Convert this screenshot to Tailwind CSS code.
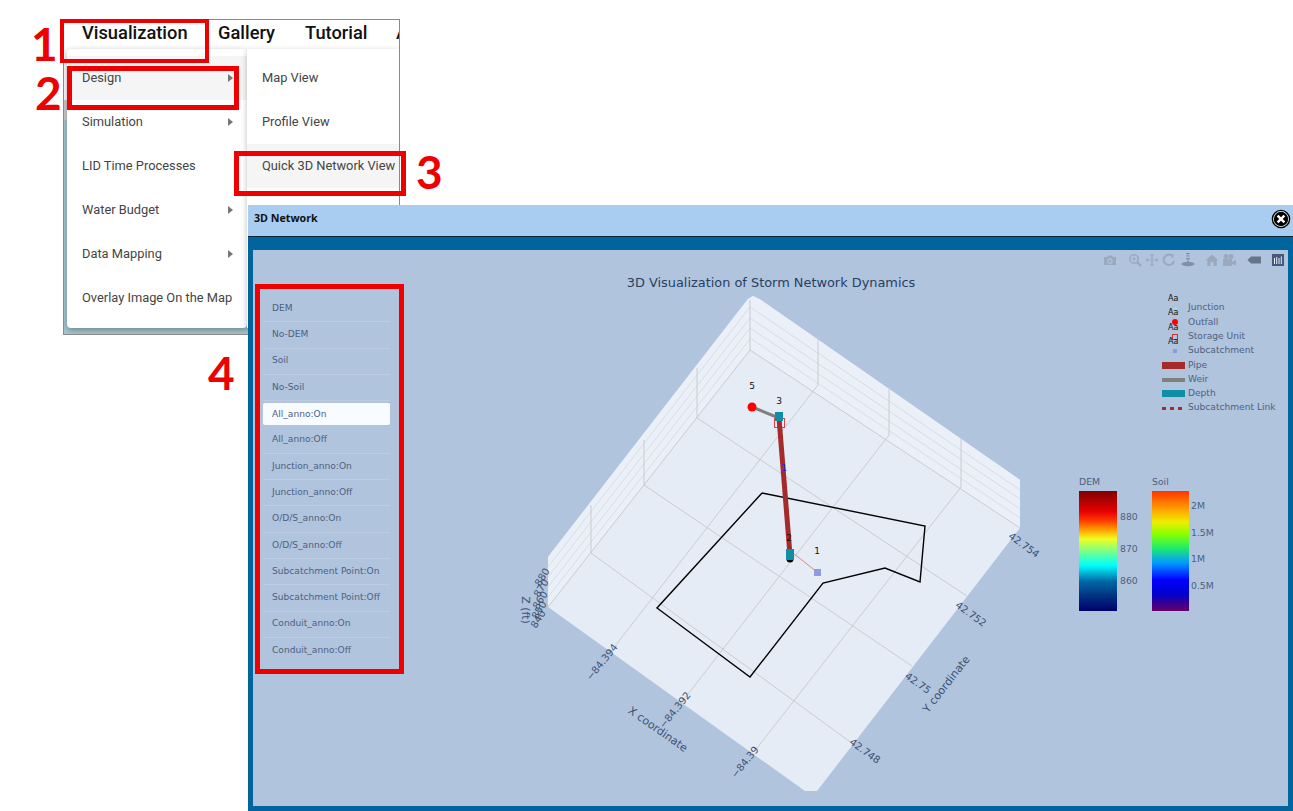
<!DOCTYPE html>
<html lang="en">

<head>
    <meta charset="UTF-8">
    <meta name="viewport" content="width=device-width, initial-scale=1.0">
    <title>Quick 3D Network View</title>
    <script src="https://cdn.jsdelivr.net/npm/@tailwindcss/browser@4"></script>
</head>

<body class="bg-white">
    <div class="relative w-[1293px] h-[811px] overflow-hidden font-['Roboto',sans-serif]">

        <!-- app frame with the open menu -->
        <div class="absolute left-[63px] top-[19px] w-[337px] h-[316px] border border-[#8a8a8a] overflow-hidden bg-white">
            <nav class="flex h-[29px] pb-[3px] pl-[18px] items-center text-[18.300px] font-medium text-[#111] leading-none">
                <span class="w-[136px] shrink-0">Visualization</span>
                <span class="w-[87px] shrink-0">Gallery</span>
                <span class="w-[91px] shrink-0">Tutorial</span>
                <span class="shrink-0">About</span>
            </nav>
            <!-- map peeking out behind the menu -->
            <div class="absolute left-0 top-[80px] w-[4px] h-[20px] bg-[#cfcfcf]"></div>
            <div class="absolute left-0 top-[100px] w-full h-[216px] bg-[#a6c8d1]"></div>

            <div class="relative flex items-start">
                <div class="w-[181px] ml-[3px] h-[279px] pt-[7px] bg-white rounded-[4px] shadow-[0_2px_6px_rgba(0,0,0,0.35)] text-[12.850px] text-[#444]">
                    <div class="h-[44px] pr-[14px] pl-[15px] flex items-center justify-between bg-[#f5f5f5]">
                        <span>Design</span><i class="w-0 h-0 border-y-[4px] border-l-[5px] border-y-transparent border-l-[#777]"></i>
                    </div>
                    <div class="h-[44px] pr-[14px] pl-[15px] flex items-center justify-between">
                        <span>Simulation</span><i class="w-0 h-0 border-y-[4px] border-l-[5px] border-y-transparent border-l-[#777]"></i>
                    </div>
                    <div class="h-[44px] pr-[14px] pl-[15px] flex items-center">LID Time Processes</div>
                    <div class="h-[44px] pr-[14px] pl-[15px] flex items-center justify-between">
                        <span>Water Budget</span><i class="w-0 h-0 border-y-[4px] border-l-[5px] border-y-transparent border-l-[#777]"></i>
                    </div>
                    <div class="h-[44px] pr-[14px] pl-[15px] flex items-center justify-between">
                        <span>Data Mapping</span><i class="w-0 h-0 border-y-[4px] border-l-[5px] border-y-transparent border-l-[#777]"></i>
                    </div>
                    <div class="h-[44px] pl-[15px] flex items-center whitespace-nowrap">Overlay Image On the Map</div>
                </div>
                <div class="w-[152px] h-[279px] pt-[7px] bg-white shadow-[0_2px_6px_rgba(0,0,0,0.25)] text-[12.850px] text-[#444]">
                    <div class="h-[44px] pl-[14.500px] flex items-center">Map View</div>
                    <div class="h-[44px] pl-[14.500px] flex items-center">Profile View</div>
                    <div class="h-[44px] pl-[14.500px] flex items-center whitespace-nowrap bg-[#f5f5f5]">Quick 3D Network View</div>
                    <div class="h-[17px] overflow-hidden">
                        <div class="h-[44px] pl-[14.500px] flex items-center">Time Series</div>
                    </div>
                </div>
            </div>
        </div>

        <!-- 3D Network window -->
        <div class="absolute left-[248px] top-[205px] w-[1045px] h-[606px] flex flex-col">
            <div class="h-[32px] shrink-0 bg-[#a9cdf1] border-b border-[#0b2233] pl-[6px] pr-[2px] pb-[4px] flex items-center justify-between">
                <span class="text-[10.700px] font-bold text-[#111] font-['Open_Sans',sans-serif]">3D Network</span>
                <svg width="20" height="20" viewBox="0 0 20 20">
                    <circle cx="10" cy="10" r="8.600" fill="#fff" stroke="#000" stroke-width="1.400" />
                    <circle cx="10" cy="10" r="7.200" fill="#000" />
                    <path d="M6.600 6.600l6.800 6.800M13.400 6.600l-6.800 6.800" stroke="#fff" stroke-width="2.400" />
                </svg>
            </div>
            <div class="flex-1 border-x-[5px] border-b-[5px] border-t-[13px] border-[#00659c] bg-[#b0c4de] relative font-['DejaVu_Sans',sans-serif]">

                <!-- plot canvas, coordinates are page pixels -->
                <svg class="absolute left-0 top-0" width="1035" height="556" viewBox="253 250 1035 556">
                    <polygon points="548,557 748,299 753,296 761,300 1020,480 1020,528 817,791 805,791 548,607" fill="#e5ecf6" />
                    <polygon points="548,557 748,299 753,296 750,350 548,607" fill="#ebf0f8" />
                    <polygon points="753,296 761,300 1020,480 1020,528 750,350" fill="#ebf0f8" />

                    <g fill="none" stroke="#d8dde4" stroke-width="1">
                        <path d="M750 307L1020 490M750 318L1020 499M750 328L1020 509M750 338L1020 518" />
                        <path d="M750 307L548 567M750 318L548 577M750 328L548 587M750 339L548 597" />
                    </g>
                    <g fill="none" stroke="#c9cccf" stroke-width="1">
                        <path d="M750 300V350M818 337V385M889 387V435M961 438V487M697 368V418M644 440V485M591 505V553" />
                        <path d="M750 350L1020 528M750 350L548 607" />
                        <path d="M818 385L615 646M889 435L685 698M961 487L757 748" />
                        <path d="M697 418L967 596M644 485L912 666M591 553L853 744" />
                    </g>

                    <polyline points="762,493 925,526 920,582 885,568 823,583 750,677 657,608 762,493" fill="none" stroke="#000" stroke-width="1.400" />

                    <line x1="793" y1="553" x2="817" y2="572" stroke="#d98a8a" stroke-width="1" />
                    <rect x="814" y="569" width="7" height="7" fill="#8e9be0" />
                    <rect x="774.500" y="418.500" width="10" height="9" fill="none" stroke="#d9434a" stroke-width="1" />
                    <line x1="752" y1="407" x2="779" y2="418" stroke="#808080" stroke-width="3" />
                    <line x1="779" y1="418" x2="790" y2="555" stroke="#a52a2a" stroke-width="5" />
                    <circle cx="752" cy="407" r="4.500" fill="#f00" />
                    <circle cx="790" cy="559" r="3.500" fill="#000" />
                    <rect x="775" y="412" width="8" height="9" fill="#0e8fa6" />
                    <rect x="786" y="549" width="8" height="11" fill="#0e8fa6" />

                    <g font-size="9" fill="#111" text-anchor="middle">
                        <text x="752" y="389">5</text>
                        <text x="779" y="404">3</text>
                        <text x="789" y="541">2</text>
                        <text x="817" y="554">1</text>
                    </g>
                    <text x="784" y="471" font-size="9" fill="#2222dd" text-anchor="middle">1</text>

                    <text x="771" y="287" font-size="12.900" fill="#2a3f5f" text-anchor="middle">3D Visualization of Storm Network Dynamics</text>

                    <g font-size="10" fill="#3e5170" text-anchor="middle">
                        <text transform="translate(602 662) rotate(-51)" dy="3.500">−84.394</text>
                        <text transform="translate(675 710) rotate(-51)" dy="3.500">−84.392</text>
                        <text transform="translate(745 762) rotate(-51)" dy="3.500">−84.39</text>
                        <text transform="translate(865 751) rotate(36)" dy="3.500">42.748</text>
                        <text transform="translate(918 683) rotate(36)" dy="3.500">42.75</text>
                        <text transform="translate(971 614) rotate(36)" dy="3.500">42.752</text>
                        <text transform="translate(1024 545) rotate(36)" dy="3.500">42.754</text>
                        <text transform="translate(542 577) rotate(-58)" dy="3.500">880</text>
                        <text transform="translate(541 588) rotate(-58)" dy="3.500">870</text>
                        <text transform="translate(540 600) rotate(-58)" dy="3.500">860</text>
                        <text transform="translate(539 610) rotate(-58)" dy="3.500">850</text>
                        <text transform="translate(538 619) rotate(-58)" dy="3.500">840</text>
                    </g>
                    <g font-size="11" fill="#3e5170" text-anchor="middle">
                        <text transform="translate(658 729) rotate(35)" dy="4">X coordinate</text>
                        <text transform="translate(946 684) rotate(-52)" dy="4">Y coordinate</text>
                        <text transform="translate(526 610) rotate(90)" dy="4">Z (ft)</text>
                    </g>
                </svg>

                <!-- modebar -->
                <div class="absolute right-[3px] top-[3px] flex items-center text-[#9aa9bd]">
                    <svg width="14" height="14" viewBox="0 0 14 14" fill="currentColor">
                        <path fill-rule="evenodd" d="M1 4h3l1-1.500h4L10 4h3v8H1zM7 5.300a2.700 2.700 0 1 0 0 5.400 2.700 2.700 0 0 0 0-5.400z" />
                        <circle cx="7" cy="8" r="1.600" />
                    </svg>
                    <svg class="ml-[11px]" width="14" height="14" viewBox="0 0 14 14" fill="none" stroke="currentColor">
                        <circle cx="6" cy="6" r="4.200" stroke-width="1.600" />
                        <path d="M9 9l4 4" stroke-width="2.400" />
                        <path d="M6 3.800v4.400M3.800 6h4.400" stroke-width="1" />
                    </svg>
                    <svg class="ml-[3px]" width="14" height="14" viewBox="0 0 14 14" fill="currentColor">
                        <path d="M7 .5l2 2.300H7.600v3.600h3.600V5L13.500 7l-2.300 2V7.600H7.600v3.600H9l-2 2.300-2-2.300h1.400V7.600H2.800V9L.5 7l2.300-2v1.400h3.600V2.800H5z" />
                    </svg>
                    <svg class="ml-[3px]" width="14" height="14" viewBox="0 0 14 14" fill="none" stroke="currentColor">
                        <path d="M10 2.600A5.200 5.200 0 1 0 12 8" stroke-width="2" />
                        <path d="M8 1l4 .5-1.500 4z" fill="currentColor" stroke="none" />
                    </svg>
                    <svg class="ml-[5px] text-[#7f8fa4]" width="14" height="14" viewBox="0 0 14 14" fill="currentColor">
                        <path d="M5.200 0h3.400v.9L6.500 2.700h2.100v.9H5.200v-.9l2.100-1.800H5.200z" />
                        <path d="M5 5h4v1H7.600v4H6.400V6H5z" />
                        <ellipse cx="7" cy="11" rx="6.500" ry="2.200" />
                    </svg>
                    <svg class="ml-[10px]" width="14" height="14" viewBox="0 0 14 14" fill="currentColor">
                        <path d="M7 1.500l6.500 5.800h-1.800V13H8.500V9h-3v4H2.300V7.300H.5z" />
                    </svg>
                    <svg class="ml-[3px]" width="14" height="14" viewBox="0 0 14 14" fill="currentColor">
                        <circle cx="4" cy="3.500" r="2.500" />
                        <circle cx="9" cy="3.500" r="2.500" />
                        <rect x="1" y="6" width="9" height="7" />
                        <path d="M10 9l4-2.500v6L10 11z" />
                    </svg>
                    <svg class="ml-[11px]" width="14" height="14" viewBox="0 0 14 14" fill="#667689">
                        <path d="M.5 7L4 3.500h10v7H4z" />
                    </svg>
                    <svg class="ml-[10px]" width="14" height="14" viewBox="0 0 14 14">
                        <rect x="1" y="1" width="12" height="12" fill="#44597c" />
                        <path d="M3.500 5v6M5.700 4v7M8 5v6M10.300 3.500V11" stroke="#e8edf4" stroke-width="1" />
                    </svg>
                </div>

                <!-- button column -->
                <div class="ml-[10px] mt-[46px] w-[127px] text-[9.100px] text-[#4d6080]">
                    <div class="h-[26.300px] pl-[9px] flex items-center border-b border-[#bccde3]">DEM</div>
                    <div class="h-[26.300px] pl-[9px] flex items-center border-b border-[#bccde3]">No-DEM</div>
                    <div class="h-[26.300px] pl-[9px] flex items-center border-b border-[#bccde3]">Soil</div>
                    <div class="h-[26.300px] pl-[9px] flex items-center border-b border-[#bccde3]">No-Soil</div>
                    <div class="h-[26.300px] pl-[9px] flex items-center border-y-2 border-transparent bg-[#f8fbff] bg-clip-padding rounded-[3px]">All_anno:On</div>
                    <div class="h-[26.300px] pl-[9px] flex items-center border-b border-[#bccde3]">All_anno:Off</div>
                    <div class="h-[26.300px] pl-[9px] flex items-center border-b border-[#bccde3]">Junction_anno:On</div>
                    <div class="h-[26.300px] pl-[9px] flex items-center border-b border-[#bccde3]">Junction_anno:Off</div>
                    <div class="h-[26.300px] pl-[9px] flex items-center border-b border-[#bccde3]">O/D/S_anno:On</div>
                    <div class="h-[26.300px] pl-[9px] flex items-center border-b border-[#bccde3]">O/D/S_anno:Off</div>
                    <div class="h-[26.300px] pl-[9px] flex items-center border-b border-[#bccde3] whitespace-nowrap">Subcatchment Point:On</div>
                    <div class="h-[26.300px] pl-[9px] flex items-center border-b border-[#bccde3] whitespace-nowrap">Subcatchment Point:Off</div>
                    <div class="h-[26.300px] pl-[9px] flex items-center border-b border-[#bccde3]">Conduit_anno:On</div>
                    <div class="h-[26.300px] pl-[9px] flex items-center">Conduit_anno:Off</div>
                </div>

                <!-- legend -->
                <div class="absolute left-[909px] top-[51px] w-[120px] text-[9.100px] text-[#4d6080]">
                    <div class="h-[14.300px] flex items-center relative">
                        <span class="absolute left-[6px] -top-[8px] text-[8px] text-[#111]">Aa</span>
                        <span class="w-[26px] flex justify-center"><i class="block w-[3px] h-[3px] rounded-full bg-[#a9d6ee]"></i></span>Junction
                    </div>
                    <div class="h-[14.300px] flex items-center relative">
                        <span class="absolute left-[6px] -top-[8px] text-[8px] text-[#111]">Aa</span>
                        <span class="w-[26px] flex justify-center"><i class="block w-[6px] h-[6px] rounded-full bg-[#f00]"></i></span>Outfall
                    </div>
                    <div class="h-[14.300px] flex items-center relative">
                        <span class="absolute left-[6px] -top-[8px] text-[8px] text-[#111]">Aa</span>
                        <span class="w-[26px] flex justify-center"><i class="block w-[6px] h-[6px] border border-[#c8323c]"></i></span>Storage Unit
                    </div>
                    <div class="h-[14.300px] flex items-center relative">
                        <span class="absolute left-[6px] -top-[8px] text-[8px] text-[#111]">Aa</span>
                        <span class="w-[26px] flex justify-center"><i class="block w-[4px] h-[4px] bg-[#8e9be0]"></i></span>Subcatchment
                    </div>
                    <div class="h-[14.300px] flex items-center"><i class="block w-[23px] h-[7px] mr-[3px] bg-[#a52a2a]"></i>Pipe</div>
                    <div class="h-[14.300px] flex items-center"><i class="block w-[23px] h-[4px] mr-[3px] bg-[#808080]"></i>Weir</div>
                    <div class="h-[14.300px] flex items-center"><i class="block w-[23px] h-[7px] mr-[3px] bg-[#0e8fa6]"></i>Depth</div>
                    <div class="h-[14.300px] flex items-center whitespace-nowrap">
                        <span class="w-[26px] flex gap-[4px]"><i class="block w-[4px] h-[3px] bg-[#a52a2a]"></i><i class="block w-[4px] h-[3px] bg-[#a52a2a]"></i><i class="block w-[4px] h-[3px] bg-[#a52a2a]"></i></span>Subcatchment Link
                    </div>
                </div>

                <!-- colour bars -->
                <div class="absolute left-[826px] top-[225px] flex gap-[35px] text-[9.300px] text-[#4d6080]">
                    <div class="w-[38px]">
                        <div class="h-[16px] leading-[14px]">DEM</div>
                        <div class="relative w-[38px] h-[120px] bg-[linear-gradient(to_bottom,#7f0000_0%,#e60000_17%,#ff3300_24%,#ff9900_32%,#eeff22_40%,#66ff99_52%,#00ffff_62%,#006aa8_75%,#00307f_88%,#000070_100%)]">
                            <span class="absolute left-[41px] top-[19px]">880</span>
                            <span class="absolute left-[41px] top-[51px]">870</span>
                            <span class="absolute left-[41px] top-[83px]">860</span>
                        </div>
                    </div>
                    <div class="w-[37px]">
                        <div class="h-[16px] leading-[14px]">Soil</div>
                        <div class="relative w-[37px] h-[120px] bg-[linear-gradient(to_bottom,#ff3300_0%,#ff9900_14%,#eeee00_26%,#88ff00_36%,#22ee66_47%,#0099ff_60%,#0000ff_74%,#0000cc_86%,#660066_100%)]">
                            <span class="absolute left-[39px] top-[8px]">2M</span>
                            <span class="absolute left-[39px] top-[35px]">1.5M</span>
                            <span class="absolute left-[39px] top-[61px]">1M</span>
                            <span class="absolute left-[39px] top-[88px]">0.5M</span>
                        </div>
                    </div>
                </div>
            </div>
        </div>

        <!-- red annotations -->
        <div class="absolute left-[60px] top-[19px] w-[149px] h-[44px] border-4 border-[#ee0000]"></div>
        <div class="absolute left-[67px] top-[66px] w-[172px] h-[44px] border-[5px] border-[#ee0000]"></div>
        <div class="absolute left-[234px] top-[151px] w-[172px] h-[45px] border-[5px] border-[#ee0000]"></div>
        <div class="absolute left-[255px] top-[284px] w-[149px] h-[390px] border-[5px] border-[#ee0000]"></div>
        <span class="absolute left-[31px] top-[16px] text-[46px] leading-[56px] font-bold text-[#ee0000] font-['Lato',sans-serif]">1</span>
        <span class="absolute left-[35px] top-[65px] text-[46px] leading-[56px] font-bold text-[#ee0000] font-['Lato',sans-serif]">2</span>
        <span class="absolute left-[416px] top-[144px] text-[46px] leading-[56px] font-bold text-[#ee0000] font-['Lato',sans-serif]">3</span>
        <span class="absolute left-[208px] top-[345px] text-[46px] leading-[56px] font-bold text-[#ee0000] font-['Lato',sans-serif]">4</span>
    </div>
</body>

</html>
